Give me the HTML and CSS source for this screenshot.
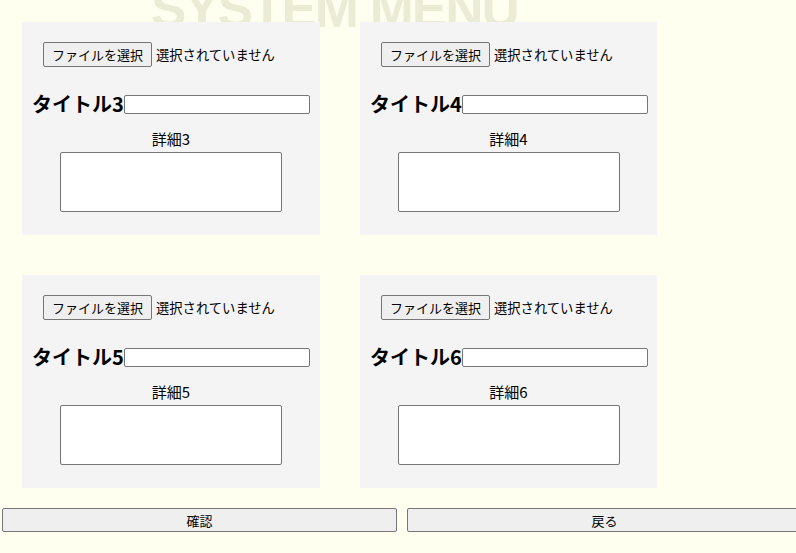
FILE: index.html
```html
<!DOCTYPE html>
<html lang="ja">
<head>
<meta charset="utf-8">
<title>SYSTEM MENU</title>
<link rel="stylesheet" href="styles.css">
</head>
<body>
<div class="bg-title">SYSTEM MENU</div>
<main class="grid">
  <section class="card">
    <div class="file-row"><button class="file-btn" type="button">ファイルを選択</button><span class="file-status">選択されていません</span></div>
    <div class="title-row"><span class="title-label">タイトル3</span><input class="title-input" type="text"></div>
    <div class="detail-label">詳細3</div>
    <textarea class="detail-input"></textarea>
  </section>
  <section class="card">
    <div class="file-row"><button class="file-btn" type="button">ファイルを選択</button><span class="file-status">選択されていません</span></div>
    <div class="title-row"><span class="title-label">タイトル4</span><input class="title-input" type="text"></div>
    <div class="detail-label">詳細4</div>
    <textarea class="detail-input"></textarea>
  </section>
  <section class="card">
    <div class="file-row"><button class="file-btn" type="button">ファイルを選択</button><span class="file-status">選択されていません</span></div>
    <div class="title-row"><span class="title-label">タイトル5</span><input class="title-input" type="text"></div>
    <div class="detail-label">詳細5</div>
    <textarea class="detail-input"></textarea>
  </section>
  <section class="card">
    <div class="file-row"><button class="file-btn" type="button">ファイルを選択</button><span class="file-status">選択されていません</span></div>
    <div class="title-row"><span class="title-label">タイトル6</span><input class="title-input" type="text"></div>
    <div class="detail-label">詳細6</div>
    <textarea class="detail-input"></textarea>
  </section>
</main>
<div class="actions">
  <button class="action-btn" type="button">確認</button>
  <button class="action-btn" type="button">戻る</button>
</div>
</body>
</html>
```
FILE: styles.css
```css
html, body {
  margin: 0;
  padding: 0;
}
body {
  background: #fffff0;
  font-family: "Noto Sans CJK JP", "Liberation Sans", sans-serif;
  color: #000;
  overflow: hidden;
  width: 796px;
  height: 553px;
  position: relative;
}
.bg-title {
  position: absolute;
  left: 151px;
  top: -21px;
  z-index: -1;
  font-family: "Liberation Sans", Arial, sans-serif;
  font-weight: bold;
  font-size: 53px;
  line-height: 60px;
  letter-spacing: -2px;
  color: #ebebd6;
  white-space: nowrap;
}
.grid {
  display: grid;
  grid-template-columns: 298px 297px;
  grid-auto-rows: 213px;
  column-gap: 40px;
  row-gap: 40px;
  padding: 22px 0 0 22px;
}
.card {
  background: #f4f4f4;
  padding-top: 20px;
  box-sizing: border-box;
}
.file-row {
  display: flex;
  align-items: center;
  height: 25px;
  margin-left: 21px;
  gap: 4px;
}
.file-btn {
  font-family: "Noto Sans CJK JP", sans-serif;
  font-size: 13px;
  height: 25px;
  width: 109px;
  padding: 0;
  background: #efefef;
  border: 1px solid #767676;
  border-radius: 2px;
  color: #000;
}
.file-status {
  font-size: 13.3px;
  line-height: 25px;
  white-space: nowrap;
}
.title-row {
  display: flex;
  align-items: center;
  margin-top: 23px;
  margin-left: 10px;
  height: 28px;
}
.title-label {
  font-size: 20px;
  font-weight: bold;
  line-height: 28px;
  white-space: nowrap;
}
.title-input {
  width: 186px;
  height: 19px;
  box-sizing: border-box;
  border: 1px solid #767676;
  border-radius: 2px;
  background: #fff;
  padding: 0;
  margin: 0;
}
.detail-label {
  text-align: center;
  font-size: 15px;
  line-height: 20px;
  margin-top: 11px;
}
.detail-input {
  display: block;
  width: 222px;
  height: 60px;
  box-sizing: border-box;
  margin: 3px auto 0;
  border: 1px solid #767676;
  border-radius: 2px;
  background: #fff;
  resize: none;
  padding: 0;
}
.actions {
  display: flex;
  gap: 10px;
  margin-top: 20px;
  padding-left: 2px;
}
.action-btn {
  flex: none;
  width: 395px;
  height: 24px;
  font-family: "Noto Sans CJK JP", sans-serif;
  font-size: 13px;
  background: #efefef;
  border: 1px solid #767676;
  border-radius: 2px;
  color: #000;
  padding: 0;
}
```
